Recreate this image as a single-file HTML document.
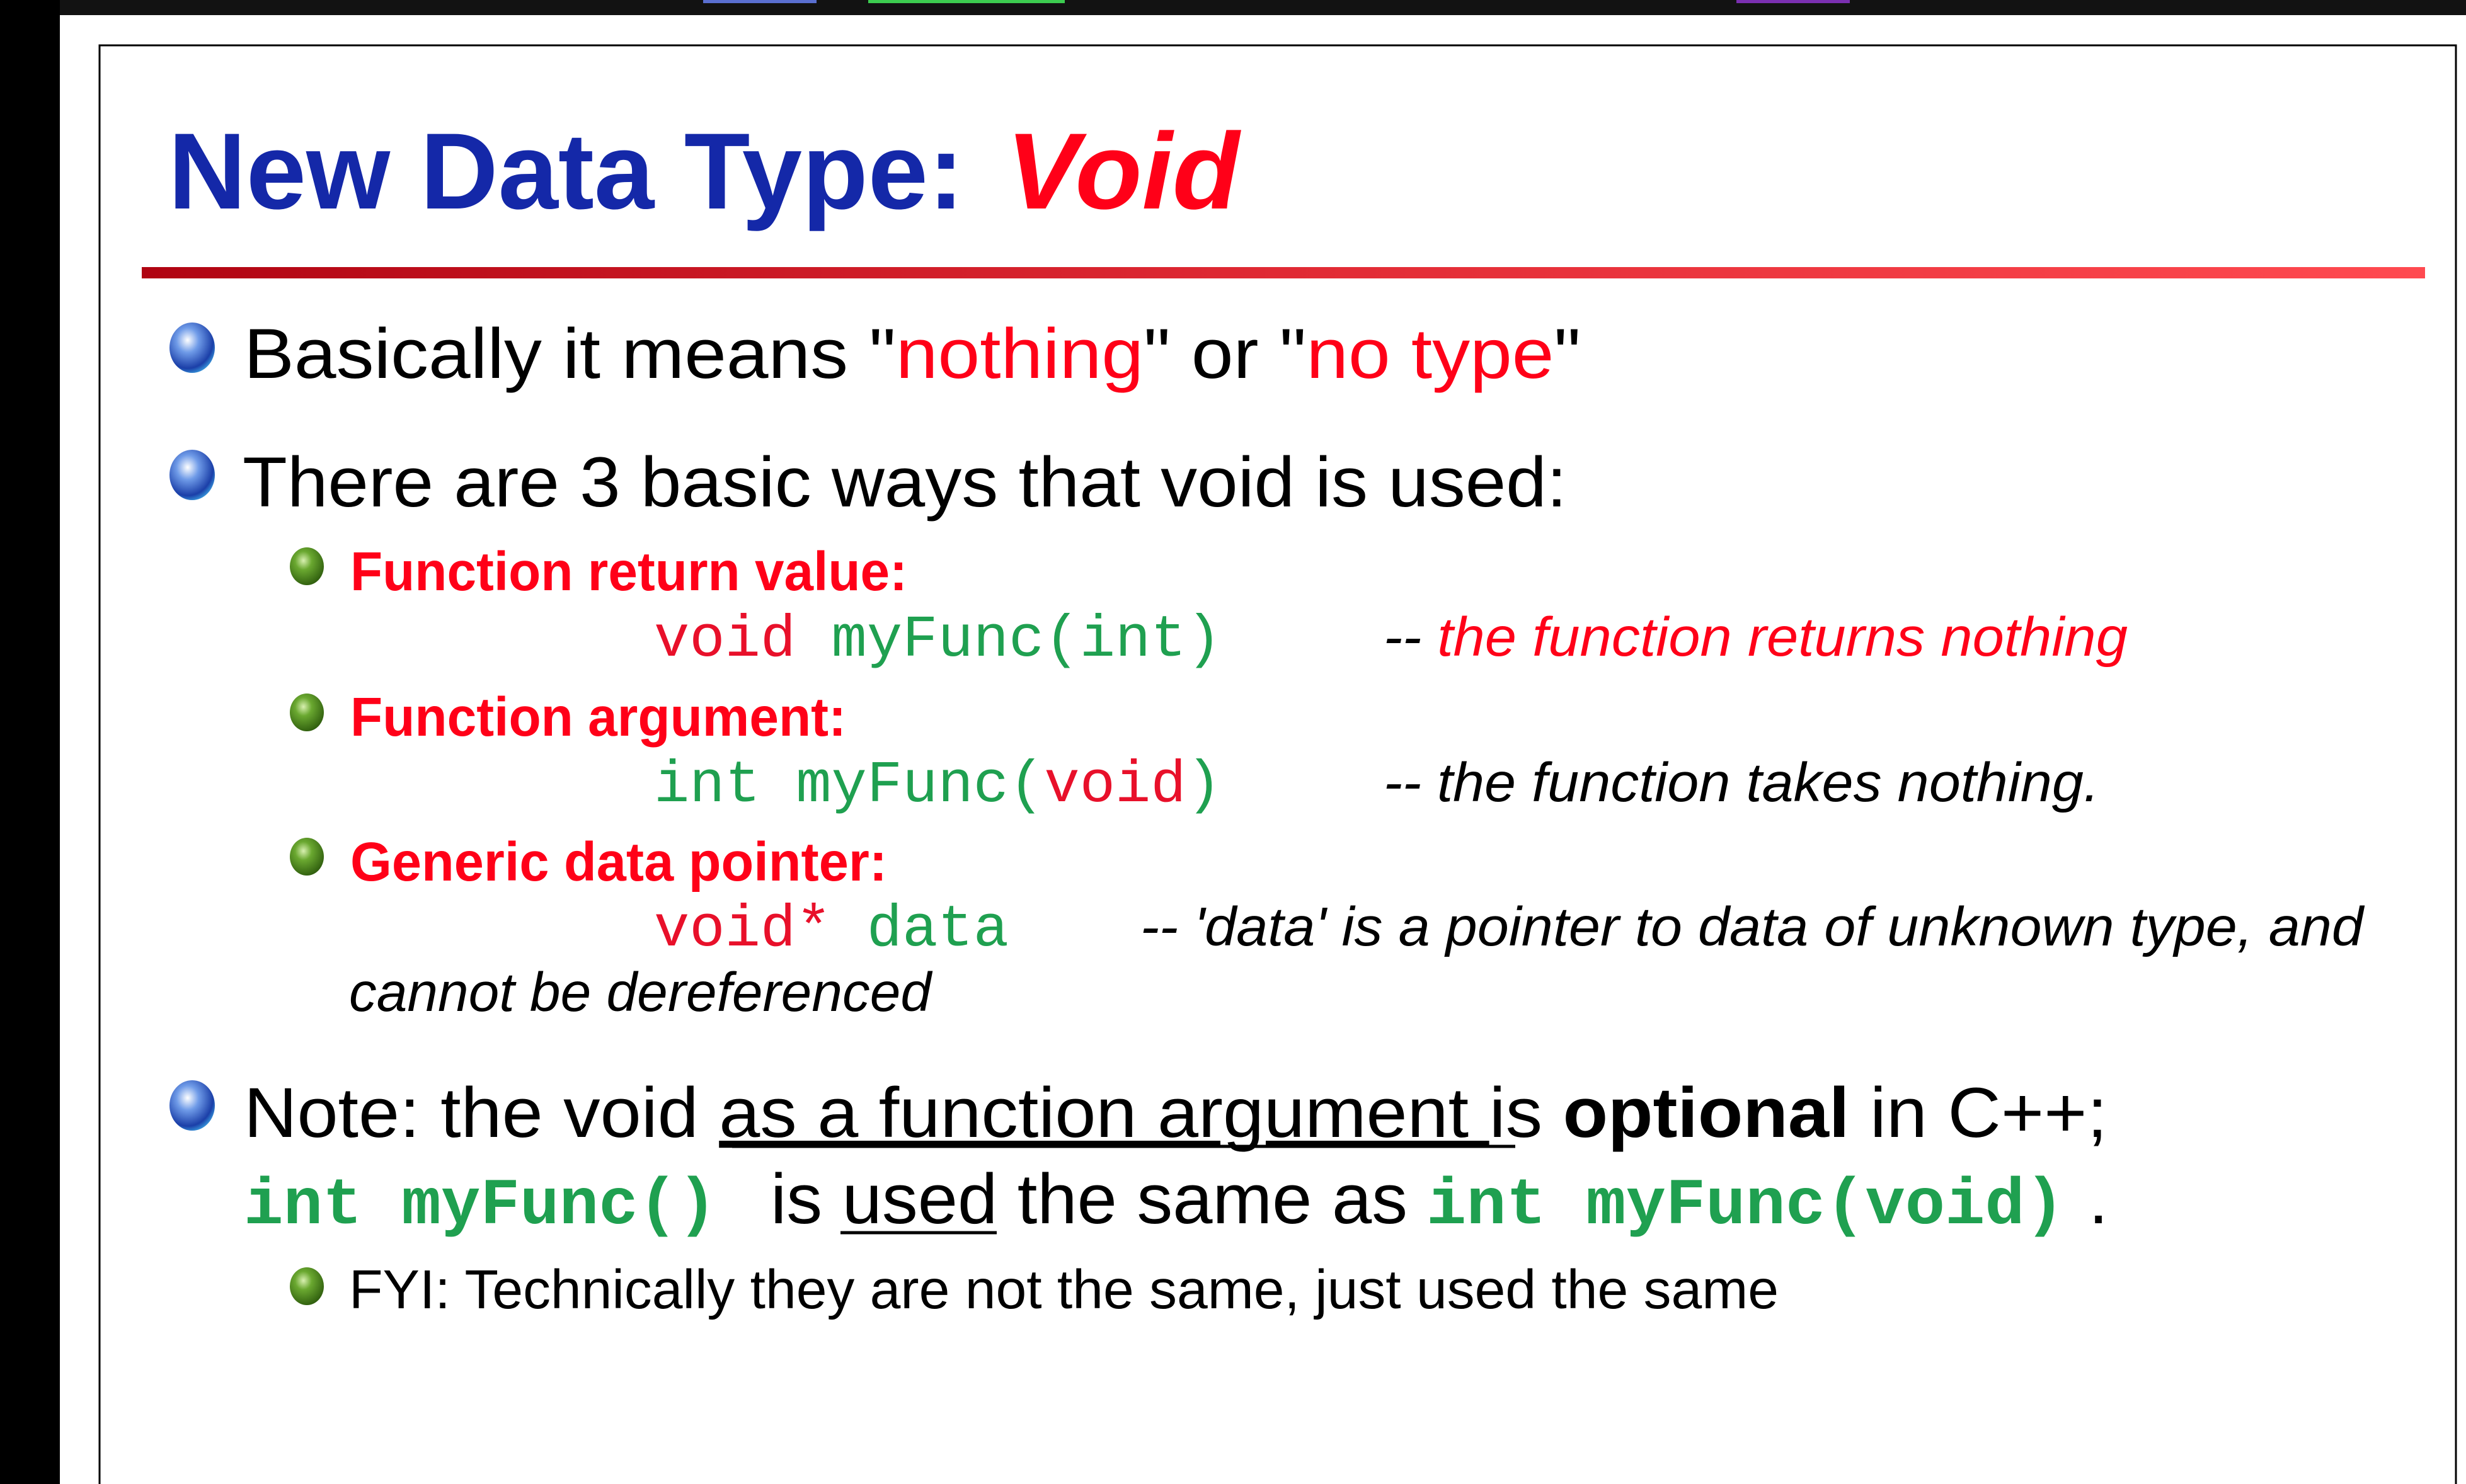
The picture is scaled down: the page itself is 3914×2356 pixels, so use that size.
<!DOCTYPE html>
<html><head><meta charset="utf-8"><style>
html,body{margin:0;padding:0;background:#fff;width:3914px;height:2356px;overflow:hidden}
svg{display:block}
</style></head><body>
<svg width="3914" height="2356" viewBox="0 0 3914 2356" xmlns="http://www.w3.org/2000/svg">
<defs>
<linearGradient id="rl" x1="0" x2="1" y1="0" y2="0"><stop offset="0" stop-color="#b00412"/><stop offset="0.5" stop-color="#e02a34"/><stop offset="1" stop-color="#ff4a50"/></linearGradient>
<radialGradient id="bb" cx="0.4" cy="0.35" r="0.7"><stop offset="0" stop-color="#ffffff"/><stop offset="0.35" stop-color="#6f9be8"/><stop offset="0.8" stop-color="#1b3fa8"/><stop offset="1" stop-color="#3aa0e0"/></radialGradient>
<radialGradient id="gb" cx="0.4" cy="0.35" r="0.7"><stop offset="0" stop-color="#d8f0b0"/><stop offset="0.35" stop-color="#6aa830"/><stop offset="1" stop-color="#2c5a0c"/></radialGradient>
</defs>
<rect width="3914" height="2356" fill="#fff"/>
<rect x="0" y="0" width="3914" height="24" fill="#121212"/>
<rect x="1116" y="0" width="180" height="5" fill="#5a6fd0"/>
<rect x="1378" y="0" width="312" height="5" fill="#3ccc50"/>
<rect x="2756" y="0" width="180" height="5" fill="#7a2fb0"/>
<rect x="0" y="0" width="95" height="2356" fill="#000"/>
<rect x="158" y="72" width="3740" height="2300" fill="none" stroke="#000" stroke-width="3"/>
<g font-family="'Liberation Sans', sans-serif">
<text x="267" y="331" font-size="172" font-weight="bold" fill="#1428a8" textLength="1263" lengthAdjust="spacingAndGlyphs">New Data Type:</text>
<text x="1597" y="331" font-size="172" font-weight="bold" font-style="italic" fill="#ff0018" textLength="370" lengthAdjust="spacingAndGlyphs">Void</text>
<rect x="225" y="424" width="3624" height="18" fill="url(#rl)"/>

<ellipse cx="305" cy="552" rx="36" ry="40" fill="url(#bb)"/>
<ellipse cx="305" cy="754" rx="36" ry="40" fill="url(#bb)"/>
<ellipse cx="305" cy="1755" rx="36" ry="40" fill="url(#bb)"/>
<ellipse cx="487" cy="899" rx="27" ry="30" fill="url(#gb)"/>
<ellipse cx="487" cy="1131" rx="27" ry="30" fill="url(#gb)"/>
<ellipse cx="487" cy="1360" rx="27" ry="30" fill="url(#gb)"/>
<ellipse cx="487" cy="2042" rx="27" ry="30" fill="url(#gb)"/>

<text x="387" y="600" font-size="112" fill="#000" textLength="2122" lengthAdjust="spacingAndGlyphs">Basically it means "<tspan fill="#ff0018">nothing</tspan>" or "<tspan fill="#ff0018">no type</tspan>"</text>
<text x="385" y="804" font-size="112" fill="#000" textLength="2102" lengthAdjust="spacingAndGlyphs">There are 3 basic ways that void is used:</text>

<text x="556" y="937" font-size="87" font-weight="bold" fill="#ff0018" textLength="884" lengthAdjust="spacingAndGlyphs">Function return value:</text>
<text x="556" y="1168" font-size="87" font-weight="bold" fill="#ff0018" textLength="787" lengthAdjust="spacingAndGlyphs">Function argument:</text>
<text x="556" y="1398" font-size="87" font-weight="bold" fill="#ff0018" textLength="852" lengthAdjust="spacingAndGlyphs">Generic data pointer:</text>

<g font-family="'Liberation Mono', monospace" font-size="94">
<text x="1038" y="1041" textLength="901" lengthAdjust="spacingAndGlyphs"><tspan fill="#e8102a">void</tspan><tspan fill="#1fa050"> myFunc(int)</tspan></text>
<text x="1038" y="1272" textLength="901" lengthAdjust="spacingAndGlyphs"><tspan fill="#1fa050">int myFunc(</tspan><tspan fill="#e8102a">void</tspan><tspan fill="#1fa050">)</tspan></text>
<text x="1038" y="1501" textLength="563" lengthAdjust="spacingAndGlyphs"><tspan fill="#e8102a">void*</tspan><tspan fill="#1fa050"> data</tspan></text>
</g>

<g font-size="87" font-style="italic">
<text x="2196" y="1041" fill="#000" textLength="1181" lengthAdjust="spacingAndGlyphs">-- <tspan fill="#ff0018">the function returns nothing</tspan></text>
<text x="2196" y="1272" fill="#000" textLength="1136" lengthAdjust="spacingAndGlyphs">-- the function takes nothing.</text>
<text x="1810" y="1501" fill="#000" textLength="1941" lengthAdjust="spacingAndGlyphs">-- 'data' is a pointer to data of unknown type, and</text>
<text x="554" y="1605" fill="#000" textLength="924" lengthAdjust="spacingAndGlyphs">cannot be dereferenced</text>
</g>

<text x="387" y="1805" font-size="112" fill="#000" textLength="2958" lengthAdjust="spacingAndGlyphs">Note: the void <tspan text-decoration="underline">as a function argument </tspan>is <tspan font-weight="bold">optional</tspan> in C++;</text>
<line x1="1162" y1="1820" x2="2405" y2="1820" stroke="#000" stroke-width="5"/>
<text x="387" y="1942" font-family="'Liberation Mono', monospace" font-size="104" font-weight="bold" fill="#1fa050" textLength="751" lengthAdjust="spacingAndGlyphs">int myFunc()</text>
<text x="1223" y="1942" font-size="112" fill="#000" textLength="1011" lengthAdjust="spacingAndGlyphs">is used the same as</text>
<line x1="1334" y1="1957" x2="1582" y2="1957" stroke="#000" stroke-width="5"/>
<text x="2264" y="1942" font-family="'Liberation Mono', monospace" font-size="104" font-weight="bold" fill="#1fa050" textLength="1013" lengthAdjust="spacingAndGlyphs">int myFunc(void)</text>
<text x="3315" y="1942" font-size="112" fill="#000">.</text>

<text x="554" y="2077" font-size="87" fill="#000" textLength="2269" lengthAdjust="spacingAndGlyphs">FYI: Technically they are not the same, just used the same</text>
</g>
</svg>
</body></html>
